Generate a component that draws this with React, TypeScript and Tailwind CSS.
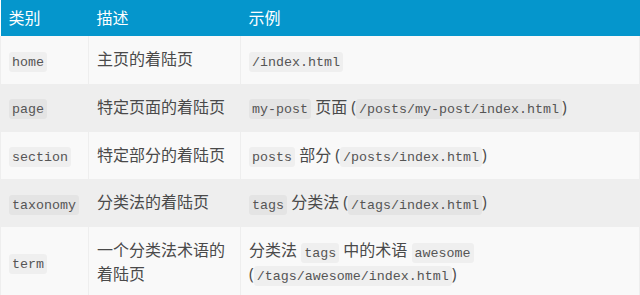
import React from "react";

const C = ({ children }: { children: React.ReactNode }) => (
  <code className="rounded-[3px] bg-black/[0.04] px-[3px] py-[2.5px] font-['Liberation_Mono',monospace] text-[13.33px] leading-none text-[#555]">
    {children}
  </code>
);

type Row = { k: string; d: React.ReactNode; e: React.ReactNode };

const rows: Row[] = [
  { k: "home", d: "主页的着陆页", e: <C>/index.html</C> },
  {
    k: "page",
    d: "特定页面的着陆页",
    e: (
      <>
        <C>my-post</C> 页面 (<C>/posts/my-post/index.html</C>)
      </>
    ),
  },
  {
    k: "section",
    d: "特定部分的着陆页",
    e: (
      <>
        <C>posts</C> 部分 (<C>/posts/index.html</C>)
      </>
    ),
  },
  {
    k: "taxonomy",
    d: "分类法的着陆页",
    e: (
      <>
        <C>tags</C> 分类法 (<C>/tags/index.html</C>)
      </>
    ),
  },
  {
    k: "term",
    d: "一个分类法术语的着陆页",
    e: (
      <>
        分类法 <C>tags</C> 中的术语 <C>awesome</C> (<C>/tags/awesome/index.html</C>)
      </>
    ),
  },
];

export default function App() {
  return (
    <div className="h-[295px] w-[640px] overflow-hidden bg-white font-['Open_Sans','Noto_Sans_CJK_SC',sans-serif] text-[16px] text-[#4a4a4a]">
      <table className="w-[639px] table-fixed border-collapse">
        <colgroup>
          <col className="w-[88px]" />
          <col className="w-[152px]" />
          <col className="w-[399px]" />
        </colgroup>
        <thead>
          <tr className="bg-[#0596cc] text-white">
            <th className="h-[36px] px-2 py-0 text-left align-middle font-normal leading-6">类别</th>
            <th className="h-[36px] px-2 py-0 text-left align-middle font-normal leading-6">描述</th>
            <th className="h-[36px] px-2 py-0 text-left align-middle font-normal leading-6">示例</th>
          </tr>
        </thead>
        <tbody>
          {rows.map((r, i) => (
            <tr key={r.k} className={i % 2 === 0 ? "bg-[#f9f9f9]" : "bg-[#eeeeee]"}>
              <td className="border-x border-[#eeeeee] px-2 py-3 align-middle leading-[23.75px]">
                <C>{r.k}</C>
              </td>
              <td className="border-x border-[#eeeeee] px-2 py-3 align-middle leading-[23.75px]">{r.d}</td>
              <td className="border-x border-[#eeeeee] px-2 py-3 align-middle leading-[23.75px]">{r.e}</td>
            </tr>
          ))}
        </tbody>
      </table>
    </div>
  );
}
